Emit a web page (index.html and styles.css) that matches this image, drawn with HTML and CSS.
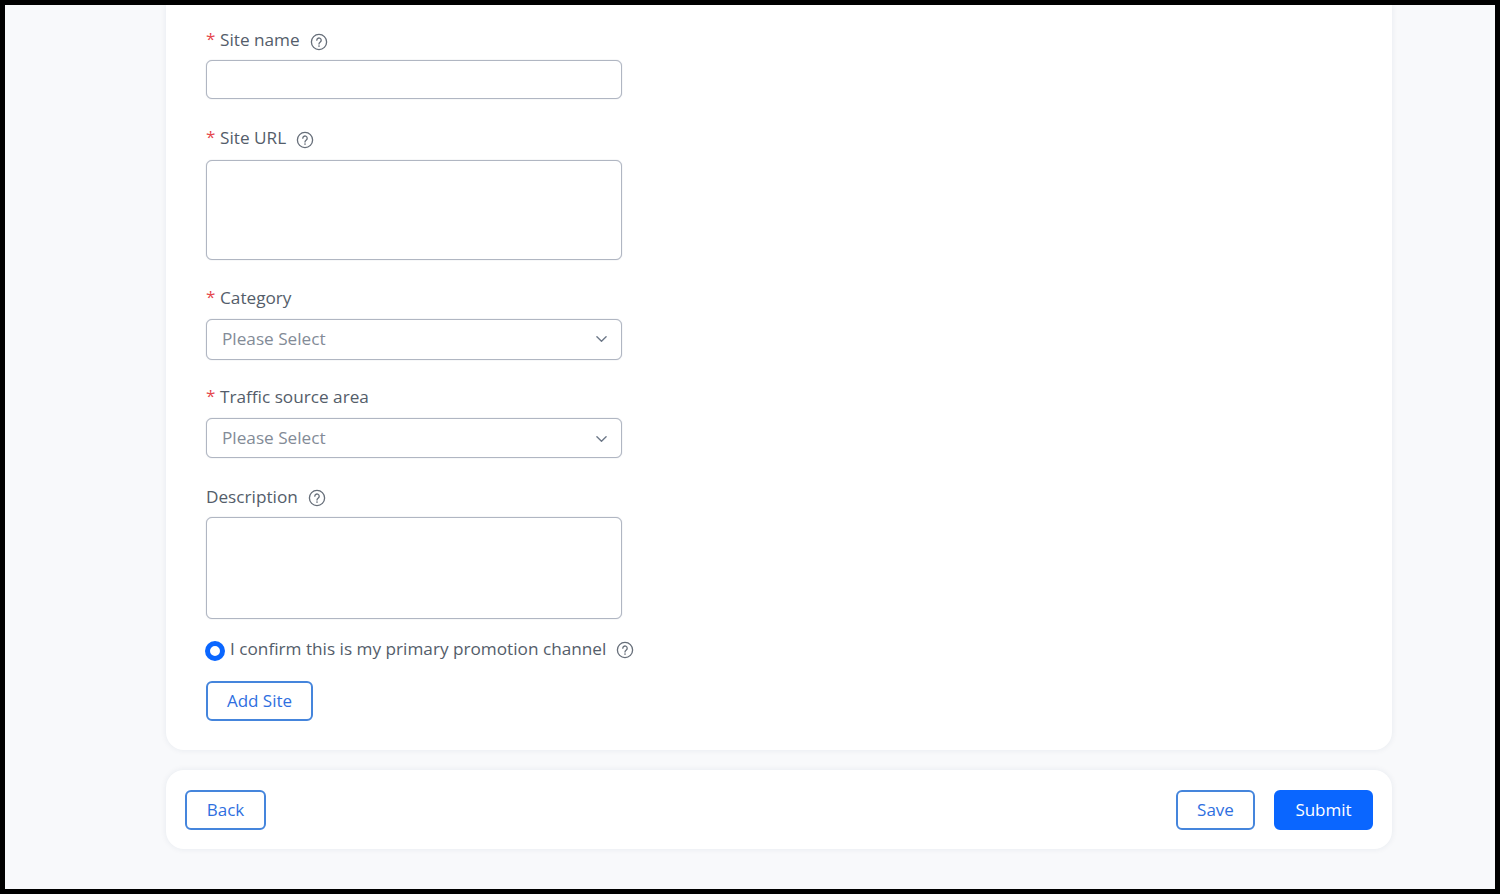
FILE: index.html
```html
<!DOCTYPE html>
<html lang="en">
<head>
<meta charset="utf-8">
<title>Add Site</title>
<link rel="stylesheet" href="styles.css">
</head>
<body>
<svg class="defs" width="0" height="0" aria-hidden="true">
  <symbol id="help" viewBox="0 0 18 18">
    <circle cx="9" cy="9" r="7.6" fill="none" stroke="currentColor" stroke-width="1.3"/>
    <path d="M6.8 7.2a2.2 2.2 0 1 1 3.5 1.8c-.8.6-1.3 1-1.3 2" fill="none" stroke="currentColor" stroke-width="1.3" stroke-linecap="round"/>
    <circle cx="9" cy="13" r=".85" fill="currentColor"/>
  </symbol>
  <symbol id="chev" viewBox="0 0 12 8">
    <path d="M1 1.5l5 5 5-5" fill="none" stroke="currentColor" stroke-width="1.5" stroke-linecap="round" stroke-linejoin="round"/>
  </symbol>
</svg>
<div class="frame">
  <main class="page">
    <section class="card form-card">
      <div class="field f-name">
        <label class="label"><span class="req">*</span>Site name<svg class="help"><use href="#help"/></svg></label>
        <div class="control c-name"></div>
      </div>
      <div class="field f-url">
        <label class="label"><span class="req">*</span>Site URL<svg class="help"><use href="#help"/></svg></label>
        <div class="control c-url"></div>
      </div>
      <div class="field f-cat">
        <label class="label"><span class="req">*</span>Category</label>
        <div class="control select c-cat"><span>Please Select</span><svg class="chev"><use href="#chev"/></svg></div>
      </div>
      <div class="field f-traffic">
        <label class="label"><span class="req">*</span>Traffic source area</label>
        <div class="control select c-traffic"><span>Please Select</span><svg class="chev"><use href="#chev"/></svg></div>
      </div>
      <div class="field f-desc">
        <label class="label">Description<svg class="help"><use href="#help"/></svg></label>
        <div class="control c-desc"></div>
      </div>
      <div class="confirm">
        <span class="radio"></span>
        <span>I confirm this is my primary promotion channel</span>
        <svg class="help"><use href="#help"/></svg>
      </div>
      <button class="btn add-site" type="button">Add Site</button>
    </section>
    <footer class="card actions">
      <button class="btn back" type="button">Back</button>
      <div class="actions-right">
        <button class="btn save" type="button">Save</button>
        <button class="btn primary submit" type="button">Submit</button>
      </div>
    </footer>
  </main>
</div>
</body>
</html>
```
FILE: styles.css
```css
* { box-sizing: border-box; }
html, body { margin: 0; height: 894px; overflow: hidden; }
body { background: #000; font-family: "Open Sans", "Noto Sans", sans-serif; }
.defs { position: absolute; }
.frame {
  height: 884px;
  margin: 5px;
  background: #f8f9fb;
  overflow: hidden;
}
.page { width: 1226px; margin-left: 161px; }
.card {
  background: #fff;
  box-shadow: 0 0 6px rgba(30, 50, 90, .08);
}
.form-card {
  height: 745px;
  padding: 25px 40px 0;
  border-radius: 0 0 18px 18px;
}
.field { width: 416px; }
.label {
  display: flex;
  align-items: center;
  height: 20px;
  font-size: 17.2px;
  line-height: 20px;
  color: #545d6a;
}
.req { color: #e5484d; width: 14px; flex: none; font-size: 17px; position: relative; top: -1px; }
.help { width: 18px; height: 18px; margin-left: 10px; color: #666e79; flex: none; position: relative; top: 1px; }
.f-name .help, .f-url .help { top: 2px; }
.control {
  border: 1px solid #b0b6c2;
  border-radius: 6px;
  background: #fff;
  box-shadow: 0 0 1px rgba(130, 140, 160, .6);
}
.f-name .control { margin-top: 10px; height: 39px; }
.f-url { margin-top: 29px; }
.c-url { margin-top: 12px; height: 100px; }
.f-cat { margin-top: 28px; }
.c-cat { margin-top: 11px; height: 41px; }
.f-traffic { margin-top: 27px; }
.c-traffic { margin-top: 11px; height: 40px; }
.f-desc { margin-top: 29px; }
.c-desc { margin-top: 10px; height: 102px; }
.select {
  display: flex;
  align-items: center;
  justify-content: space-between;
  padding: 0 14px 3px 15px;
  font-size: 17.2px;
  color: #838b97;
}
.c-traffic { padding-bottom: 1px; }
.chev { width: 11px; height: 8px; color: #6d7888; position: relative; top: 1px; }
.confirm {
  display: flex;
  align-items: center;
  height: 20px;
  margin-top: 20px;
  font-size: 17.2px;
  line-height: 20px;
  color: #545d6a;
}
.radio {
  width: 20px;
  height: 20px;
  margin: 3px 5px 0 -1px;
  border: 5px solid #0a66ff;
  border-radius: 50%;
  background: #fff;
  flex: none;
}
.btn {
  height: 40px;
  padding: 0;
  border: 2px solid #4585dc;
  border-radius: 6px;
  background: #fff;
  color: #2f6fe0;
  font: 17px/1 "Open Sans", "Noto Sans", sans-serif;
}
.add-site { display: block; width: 107px; margin-top: 22px; padding-bottom: 2px; }
.actions {
  display: flex;
  align-items: center;
  justify-content: space-between;
  height: 79px;
  margin-top: 20px;
  padding: 0 19px;
  border-radius: 18px;
}
.actions-right { display: flex; gap: 19px; }
.back { width: 81px; }
.save { width: 79px; }
.primary {
  width: 99px;
  background: #0a66ff;
  border-color: #0a66ff;
  color: #fff;
  font-weight: 500;
}
```
